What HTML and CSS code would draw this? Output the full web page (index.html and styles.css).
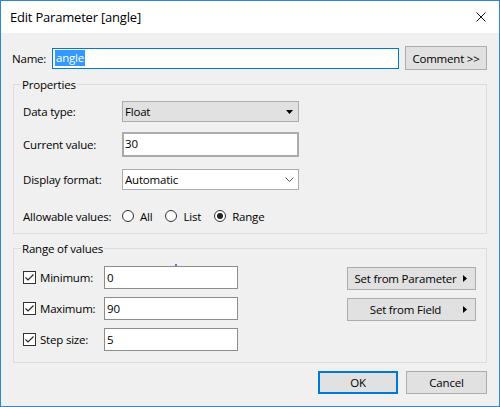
FILE: index.html
```html
<!DOCTYPE html>
<html>
<head>
<meta charset="utf-8">
<title>Edit Parameter [angle]</title>
<link rel="stylesheet" href="styles.css">
</head>
<body>
<div class="dialog">
  <div class="titlebar">
    <span class="title">Edit Parameter [angle]</span>
    <span class="close"><svg width="10" height="10" viewBox="0 0 10 10"><path d="M0.5 0.5L9.5 9.5M9.5 0.5L0.5 9.5" stroke="#111" stroke-width="1" fill="none"/></svg></span>
  </div>
  <div class="content">
    <div class="name-row">
      <span class="name-label">Name:</span>
      <div class="textbox name-box focused"><span class="sel">angle</span></div>
      <button class="btn comment-btn">Comment &gt;&gt;</button>
    </div>

    <fieldset class="group">
      <legend>Properties</legend>
      <div class="props">
        <div class="prow r1">
          <span class="plabel">Data type:</span>
          <div class="select">
            <span>Float</span>
            <svg width="7" height="4" viewBox="0 0 7 4"><path d="M0 0H7L3.5 4Z" fill="#000"/></svg>
          </div>
        </div>
        <div class="prow r2">
          <span class="plabel">Current value:</span>
          <div class="textbox current">30</div>
        </div>
        <div class="prow r3">
          <span class="plabel">Display format:</span>
          <div class="textbox combo">
            <span>Automatic</span>
            <svg width="9" height="5" viewBox="0 0 9 5"><path d="M0.5 0.5L4.5 4.5L8.5 0.5" stroke="#555" stroke-width="1" fill="none"/></svg>
          </div>
        </div>
        <div class="prow r4">
          <span class="plabel">Allowable values:</span>
          <div class="radios">
            <span class="radio-item"><span class="radio"></span>All</span>
            <span class="radio-item"><span class="radio"></span>List</span>
            <span class="radio-item"><span class="radio checked"></span>Range</span>
          </div>
        </div>
      </div>
    </fieldset>

    <fieldset class="group">
      <legend>Range of values</legend>
      <div class="range">
        <span class="dot"></span>
        <div class="range-left">
          <div class="rrow">
            <span class="check"><svg width="11" height="11" viewBox="0 0 11 11"><path d="M1.5 5.5L4 8L9.5 2.5" stroke="#222" stroke-width="1.1" fill="none"/></svg></span>
            <span class="rlabel">Minimum:</span>
            <div class="textbox rbox">0</div>
          </div>
          <div class="rrow">
            <span class="check"><svg width="11" height="11" viewBox="0 0 11 11"><path d="M1.5 5.5L4 8L9.5 2.5" stroke="#222" stroke-width="1.1" fill="none"/></svg></span>
            <span class="rlabel">Maximum:</span>
            <div class="textbox rbox">90</div>
          </div>
          <div class="rrow">
            <span class="check"><svg width="11" height="11" viewBox="0 0 11 11"><path d="M1.5 5.5L4 8L9.5 2.5" stroke="#222" stroke-width="1.1" fill="none"/></svg></span>
            <span class="rlabel">Step size:</span>
            <div class="textbox rbox">5</div>
          </div>
        </div>
        <div class="range-right">
          <button class="btn setbtn"><span class="setlabel">Set from Parameter</span><svg width="4" height="7" viewBox="0 0 4 7"><path d="M0 0L4 3.5L0 7Z" fill="#000"/></svg></button>
          <button class="btn setbtn"><span class="setlabel">Set from Field</span><svg width="4" height="7" viewBox="0 0 4 7"><path d="M0 0L4 3.5L0 7Z" fill="#000"/></svg></button>
        </div>
      </div>
    </fieldset>

    <div class="footer">
      <button class="btn ok">OK</button>
      <button class="btn cancel">Cancel</button>
    </div>
  </div>
</div>
</body>
</html>
```

FILE: styles.css
```css
* {
  box-sizing: border-box;
}

html, body {
  margin: 0;
  padding: 0;
}

body {
  width: 500px;
  height: 407px;
  font-family: "Open Sans", "Noto Sans", sans-serif;
  font-size: 11.5px;
  letter-spacing: -0.2px;
  color: #000;
  background: #fff;
}

.dialog {
  width: 500px;
  height: 407px;
  border: 1px solid #2b88d8;
  background: #f0f0f0;
  display: flex;
  flex-direction: column;
}

.titlebar {
  flex: none;
  height: 32px;
  background: #fff;
  display: flex;
  align-items: center;
  justify-content: space-between;
  padding: 0 13px 0 9px;
}

.title {
  font-size: 13px;
  line-height: 18px;
  letter-spacing: -0.2px;
}

.close {
  display: flex;
}

.content {
  display: flex;
  flex-direction: column;
  padding: 0 12px 0 11px;
}

.name-row {
  display: flex;
  align-items: center;
  height: 24px;
  margin-top: 13px;
}

.name-label {
  width: 40px;
}

.textbox {
  background: #fff;
  border: 1px solid #8c8c8c;
  display: flex;
  align-items: center;
  padding: 0 2px;
  line-height: 16px;
}

.textbox.focused {
  border-color: #0078d7;
}

.name-box {
  width: 347px;
  height: 21px;
}

.sel {
  background: #3399ff;
  color: #fff;
  padding: 0 1px;
}

.btn {
  font-family: inherit;
  font-size: 11.5px;
  letter-spacing: -0.2px;
  color: #000;
  background: #e1e1e1;
  border: 1px solid #adadad;
  padding: 0;
  margin: 0;
}

.comment-btn {
  margin-left: auto;
  width: 82px;
  height: 24px;
}

.group {
  margin: 7px 0 0 1px;
  padding: 0;
  border: 1px solid #dcdcdc;
  min-width: 0;
}

.group legend {
  margin-left: 7px;
  padding: 0 1px;
  line-height: 15px;
  font-size: 11.5px;
}

.props {
  display: flex;
  flex-direction: column;
  padding: 0 0 7px 9px;
}

.prow {
  display: flex;
  align-items: center;
}

.r1 { height: 21px; margin-top: 9px; }
.r2 { height: 24px; margin-top: 10px; }
.r3 { height: 21px; margin-top: 13px; }
.r4 { height: 20px; margin-top: 16px; }

.plabel {
  width: 99px;
}

.select {
  width: 177px;
  height: 21px;
  background: #e1e1e1;
  border: 1px solid #adadad;
  display: flex;
  align-items: center;
  justify-content: space-between;
  padding: 0 5px 0 2px;
}

.current {
  width: 177px;
  height: 25px;
  border: 2px solid #ababab;
  padding-left: 1px;
}

.combo {
  width: 177px;
  height: 21px;
  justify-content: space-between;
  padding: 0 4px 0 2px;
  border-color: #ababab;
}

.radios {
  display: flex;
  align-items: center;
  gap: 13px;
}

.radio-item {
  display: flex;
  align-items: center;
  gap: 6px;
}

.radio {
  width: 12px;
  height: 12px;
  border: 1px solid #333;
  border-radius: 50%;
  background: #fff;
  display: flex;
  align-items: center;
  justify-content: center;
}

.radio.checked::after {
  content: "";
  width: 6px;
  height: 6px;
  border-radius: 50%;
  background: #222;
}

.range {
  position: relative;
  display: flex;
  justify-content: space-between;
  padding: 10px 10px 11px 9px;
}

.dot {
  position: absolute;
  left: 161px;
  top: 8px;
  width: 2px;
  height: 2px;
  background: #3a4ae0;
  border-radius: 1px;
}

.range-left {
  display: flex;
  flex-direction: column;
  gap: 8px;
}

.rrow {
  display: flex;
  align-items: center;
  height: 23px;
}

.check {
  width: 13px;
  height: 13px;
  border: 1px solid #333;
  background: #fff;
  display: flex;
  align-items: center;
  justify-content: center;
}

.rlabel {
  width: 64px;
  margin-left: 4px;
}

.rbox {
  width: 134px;
  height: 23px;
  border-color: #8c8c8c;
  padding-left: 2px;
}

.range-right {
  display: flex;
  flex-direction: column;
  gap: 8px;
  padding-top: 1px;
}

.setbtn {
  width: 129px;
  height: 23px;
  display: flex;
  align-items: center;
  padding: 0 8px 0 0;
}

.setlabel {
  flex: 1;
  text-align: center;
}

.footer {
  display: flex;
  justify-content: flex-end;
  gap: 8px;
  margin-top: 8px;
}

.ok {
  width: 80px;
  height: 23px;
  border-color: #0078d7;
  box-shadow: inset 0 0 0 1px #0078d7;
}

.cancel {
  width: 81px;
  height: 23px;
}
```
